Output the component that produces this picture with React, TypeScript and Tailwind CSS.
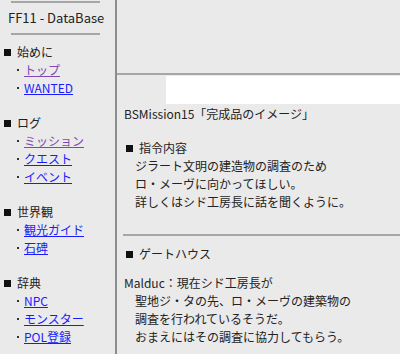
const font = { fontFamily: '"Noto Sans CJK JP", "Noto Sans", sans-serif' };

type Item = { label: string; visited?: boolean };
type Section = { title: string; items: Item[] };

const sections: Section[] = [
  { title: "始めに", items: [{ label: "トップ", visited: true }, { label: "WANTED" }] },
  {
    title: "ログ",
    items: [{ label: "ミッション", visited: true }, { label: "クエスト" }, { label: "イベント" }],
  },
  { title: "世界観", items: [{ label: "観光ガイド" }, { label: "石碑" }] },
  { title: "辞典", items: [{ label: "NPC" }, { label: "モンスター" }, { label: "POL登録" }] },
];

function Sidebar() {
  return (
    <div className="w-[117px] shrink-0 border-r-2 border-[#8c8c8c] pt-px">
      <div className="ml-[11px] w-[89px] border-t-2 border-[#a6a6a6]" />
      <div className="h-[30px] flex items-center pl-2 text-[13px] text-[#222]">FF11 - DataBase</div>
      <div className="ml-[11px] w-[89px] border-t-2 border-[#a6a6a6]" />
      <div className="mt-2 flex flex-col gap-[17px] text-[12px] leading-[18px]">
        {sections.map((s) => (
          <div key={s.title}>
            <div className="flex items-center text-[#222]">
              <span className="ml-[4px] mr-[6px] inline-block w-[7px] h-[7px] bg-[#111]" />
              {s.title}
            </div>
            {s.items.map((it) => (
              <div key={it.label} className="flex items-center pl-[17px]">
                <span className="mr-[5px] inline-block w-[2px] h-[2px] bg-[#333]" />
                <a
                  href="#"
                  className={"underline " + (it.visited ? "text-[#8048b0]" : "text-[#1a1aff]")}
                >
                  {it.label}
                </a>
              </div>
            ))}
          </div>
        ))}
      </div>
    </div>
  );
}

function Main() {
  return (
    <div className="flex-1 text-[12px] leading-[18px] text-[#222]">
      <div className="h-[73px]" />
      <div className="border-t-2 border-[#a6a6a6]" />
      <div className="ml-[49px] mt-px h-[28px] bg-white" />
      <div className="pl-[7px] mt-px">BSMission15「完成品のイメージ」</div>
      <div className="mt-[16px] flex items-center pl-[9px]">
        <span className="mr-[6px] inline-block w-[7px] h-[7px] bg-[#111]" />
        指令内容
      </div>
      <div className="pl-[18px]">
        <div>ジラート文明の建造物の調査のため</div>
        <div>ロ・メーヴに向かってほしい。</div>
        <div>詳しくはシド工房長に話を聞くように。</div>
      </div>
      <div className="mt-[23px] ml-[6px] border-t-2 border-[#a6a6a6]" />
      <div className="mt-[9px] flex items-center pl-[9px]">
        <span className="mr-[6px] inline-block w-[7px] h-[7px] bg-[#111]" />
        ゲートハウス
      </div>
      <div className="mt-[11px] pl-[7px]">Malduc：現在シド工房長が</div>
      <div className="pl-[18px]">
        <div>聖地ジ・タの先、ロ・メーヴの建築物の</div>
        <div>調査を行われているそうだ。</div>
        <div>おまえにはその調査に協力してもらう。</div>
      </div>
    </div>
  );
}

export default function App() {
  return (
    <div className="w-[400px] h-[354px] overflow-hidden bg-[#eaeaea] flex" style={font}>
      <Sidebar />
      <Main />
    </div>
  );
}
